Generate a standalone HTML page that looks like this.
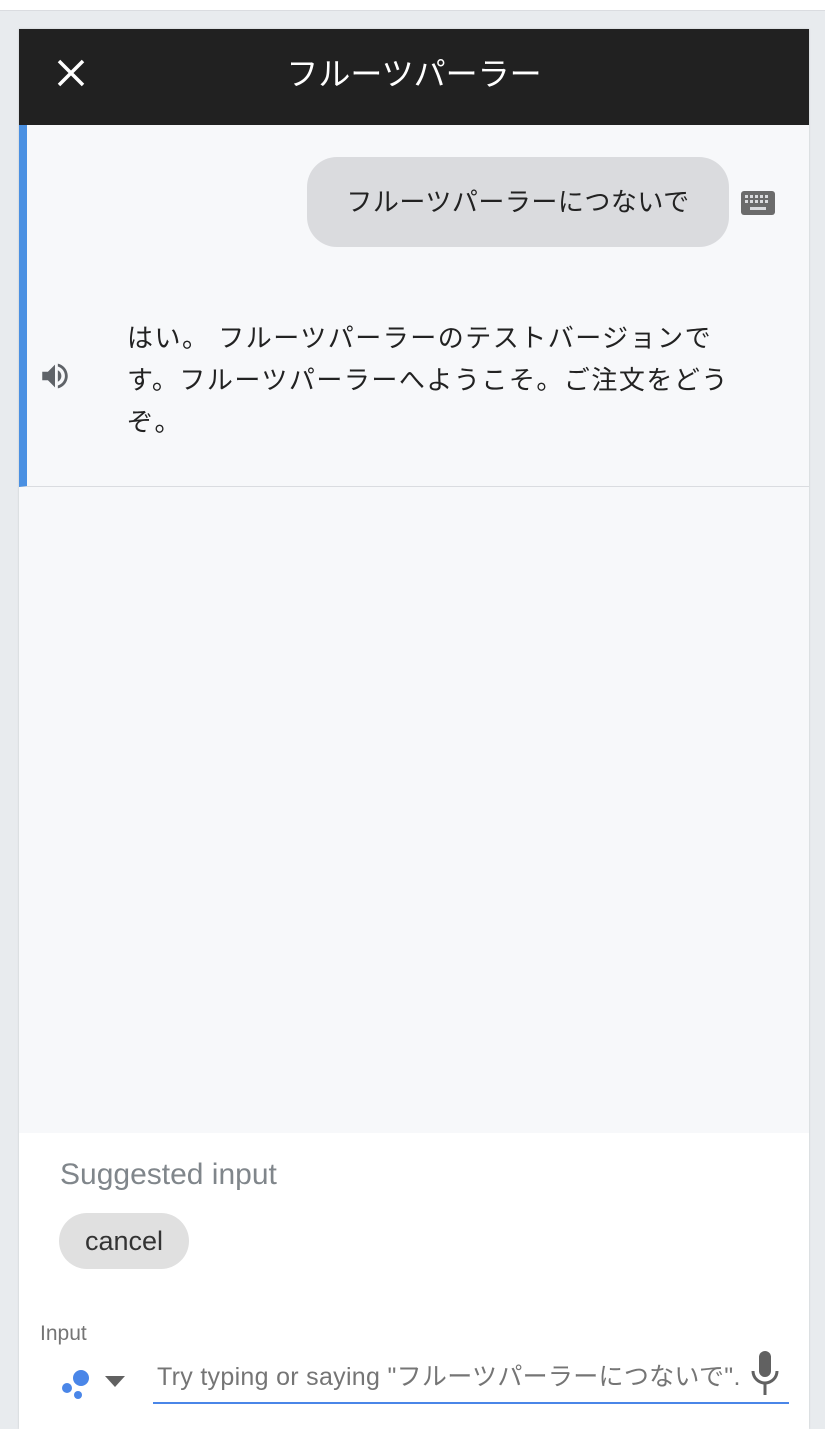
<!DOCTYPE html>
<html><head><meta charset="utf-8"><style>
*{margin:0;padding:0;box-sizing:border-box}
body{width:825px;height:1425px;background:#e8ebee;font-family:"Liberation Sans","Noto Sans CJK JP",sans-serif;position:relative;overflow:hidden}
.top{position:absolute;left:0;top:0;width:825px;height:11px;background:#fff;border-bottom:1px solid #dadce0}
.card{position:absolute;left:19px;top:29px;width:790px;height:1400px;background:#fff;box-shadow:0 0 2px rgba(0,0,0,.15)}
.hdr{position:absolute;left:0;top:0;width:790px;height:96px;background:#212121;color:#fff}
.hdr .t{position:absolute;left:0;width:790px;top:26px;text-align:center;font-size:32px;line-height:38px}
.chat{position:absolute;left:0;top:96px;width:790px;height:1008px;background:#f7f8fa}
.turn{position:absolute;left:0;top:0;width:790px;height:362px;border-left:8px solid #4a90e2;border-bottom:1px solid #dadce0}
.bub{position:absolute;left:280px;top:32px;width:422px;height:90px;background:#dadbde;border-radius:30px;font-size:26px;color:#222;text-align:center;line-height:90px;letter-spacing:0.5px}
.resp{position:absolute;left:100px;top:192px;width:640px;font-size:26px;line-height:42px;color:#222;letter-spacing:1.5px;white-space:nowrap}
.sug{position:absolute;left:41px;top:1129px;font-size:30px;color:#80868b}
.chip{position:absolute;left:40px;top:1184px;width:130px;height:56px;border-radius:28px;background:#e0e0e0;font-size:27px;color:#333;text-align:center;line-height:56px}
.lbl{position:absolute;left:21px;top:1293px;font-size:21px;color:#757575}
.inp{position:absolute;left:134px;top:1318px;width:636px;height:57px;border-bottom:2px solid #4a86e8;font-size:25px;color:#757575;line-height:60px;padding-left:4px;white-space:nowrap;overflow:hidden;letter-spacing:0.3px}
</style></head><body>
<div class="top"></div>
<div class="card">
 <div class="hdr">
  <svg style="position:absolute;left:37px;top:29px" width="30" height="30" viewBox="0 0 30 30"><path d="M3 3L27 27M27 3L3 27" stroke="#fff" stroke-width="3.5"/></svg>
  <div class="t">フルーツパーラー</div>
 </div>
 <div class="chat">
  <div class="turn">
   <div class="bub">フルーツパーラーにつないで</div>
   <svg style="position:absolute;left:714px;top:66px" width="34" height="24" viewBox="0 0 34 24"><rect width="34" height="24" rx="3" fill="#6b6b6b"/><g fill="#dadbde"><rect x="4" y="4" width="3" height="3"/><rect x="9" y="4" width="3" height="3"/><rect x="14" y="4" width="3" height="3"/><rect x="19" y="4" width="3" height="3"/><rect x="24" y="4" width="3" height="3"/><rect x="4" y="9" width="3" height="3"/><rect x="9" y="9" width="3" height="3"/><rect x="14" y="9" width="3" height="3"/><rect x="19" y="9" width="3" height="3"/><rect x="24" y="9" width="3" height="3"/><rect x="9" y="16" width="16" height="3"/></g></svg>
   <svg style="position:absolute;left:10px;top:234px" width="36" height="34" viewBox="0 0 24 24"><path fill="#5f6368" d="M3 9v6h4l5 5V4L7 9H3zm13.5 3c0-1.770-1.02-3.29-2.5-4.03v8.05c1.48-.73 2.5-2.25 2.5-4.020zM14 3.23v2.06c2.89.86 5 3.54 5 6.71s-2.110 5.85-5 6.71v2.06c4.01-.91 7-4.49 7-8.77s-2.99-7.86-7-8.77z"/></svg>
   <div class="resp">はい。 フルーツパーラーのテストバージョンで<br>す。フルーツパーラーへようこそ。ご注文をどう<br>ぞ。</div>
  </div>
 </div>
 <div class="sug">Suggested input</div>
 <div class="chip">cancel</div>
 <div class="lbl">Input</div>
 <svg style="position:absolute;left:41px;top:1338px" width="30" height="34" viewBox="0 0 30 34"><circle cx="21" cy="11" r="8" fill="#4a86e8"/><circle cx="7" cy="21" r="5" fill="#4a86e8"/><circle cx="18" cy="28" r="4" fill="#4a86e8"/></svg>
 <svg style="position:absolute;left:86px;top:1347px" width="20" height="12" viewBox="0 0 20 12"><path d="M0 0H20L10 11z" fill="#616161"/></svg>
 <div class="inp">Try typing or saying "フルーツパーラーにつないで".</div>
 <svg style="position:absolute;left:732px;top:1322px" width="28" height="44" viewBox="0 0 28 44"><rect x="8" y="0" width="12" height="26" rx="6" fill="#616161"/><path d="M2 20a12 12 0 0 0 24 0" stroke="#616161" stroke-width="3" fill="none"/><rect x="12.5" y="32" width="3" height="12" fill="#616161"/></svg>
</div>
</body></html>
